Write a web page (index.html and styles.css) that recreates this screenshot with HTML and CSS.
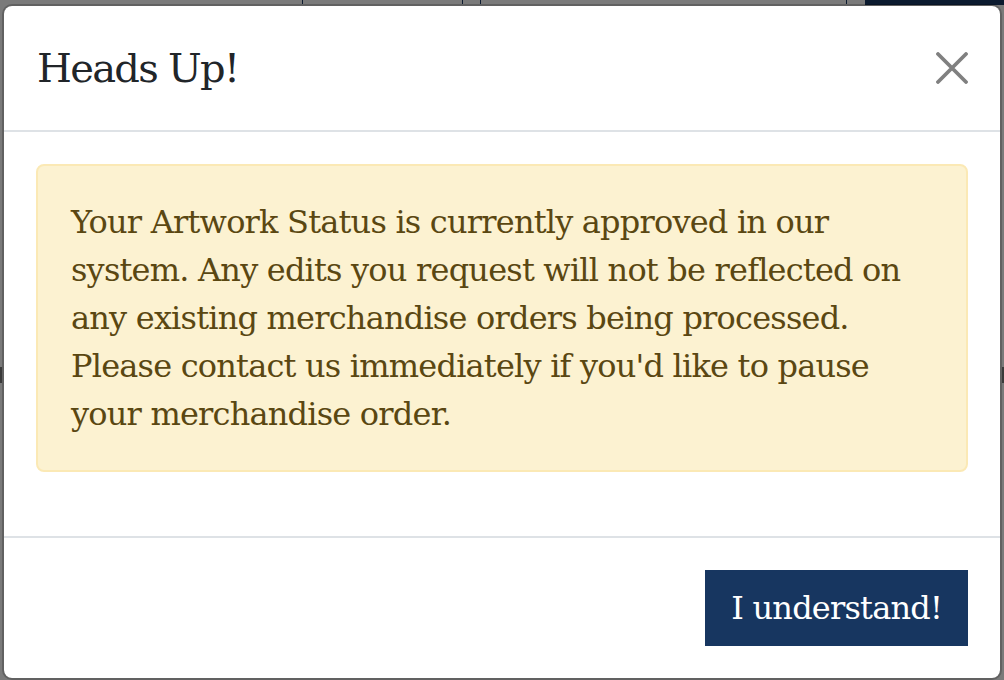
FILE: index.html
```html
<!DOCTYPE html>
<html lang="en">
<head>
<meta charset="utf-8">
<title>Heads Up!</title>
<link rel="stylesheet" href="styles.css">
</head>
<body>
<div class="page-bg" aria-hidden="true">
  <span class="bg-line l1"></span>
  <span class="bg-line l2"></span>
  <span class="bg-line l3"></span>
  <span class="bg-line l4"></span>
  <span class="bg-block"></span>
  <span class="bg-mark m1"></span>
  <span class="bg-mark m2"></span>
</div>
<div class="modal-content" role="dialog" aria-labelledby="title">
  <header class="modal-header">
    <h5 class="modal-title" id="title">Heads Up!</h5>
    <button class="close" type="button" aria-label="Close">
      <svg viewBox="0 0 32 32" width="32" height="32" aria-hidden="true">
        <path d="M2 2 L30 30 M30 2 L2 30" stroke="#808080" stroke-width="3.8" stroke-linecap="round" fill="none"/>
      </svg>
    </button>
  </header>
  <div class="modal-body">
    <div class="alert">Your Artwork Status is currently approved in our<br>system. Any edits you request will not be reflected on<br>any existing merchandise orders being processed.<br>Please contact us immediately if you'd like to pause<br>your merchandise order.</div>
  </div>
  <footer class="modal-footer">
    <button class="btn-primary" type="button">I understand!</button>
  </footer>
</div>
</body>
</html>
```
FILE: styles.css
```css
html, body {
  margin: 0;
  padding: 0;
}
body {
  background: #7a7a7a;
  width: 1004px;
  height: 680px;
  overflow: hidden;
  position: relative;
  font-family: "DejaVu Serif", "Liberation Serif", serif;
  padding: 4px 2px 0 2px;
  box-sizing: border-box;
}
.page-bg {
  position: absolute;
  inset: 0;
}
.bg-line {
  position: absolute;
  top: 0;
  width: 1px;
  height: 4px;
  background: #0d1b30;
}
.l1 { left: 302px; }
.l2 { left: 462px; }
.l3 { left: 480px; }
.l4 { left: 846px; }
.bg-block {
  position: absolute;
  top: 0;
  left: 865px;
  width: 139px;
  height: 5px;
  background: #0b1a2f;
}
.bg-mark {
  position: absolute;
  width: 2px;
  height: 16px;
  background: #3a3a3a;
}
.m1 { left: 0; top: 367px; }
.m2 { right: 0; top: 367px; }

.modal-content {
  position: relative;
  width: 1000px;
  background: #fff;
  border: 2px solid rgba(0, 0, 0, 0.2);
  border-radius: 10px;
  box-sizing: border-box;
  background-clip: padding-box;
  display: flex;
  flex-direction: column;
}
.modal-header {
  display: flex;
  align-items: center;
  justify-content: space-between;
  padding: 32px 32px 32px 33px;
  border-bottom: 2px solid #dee2e6;
}
.modal-title {
  margin: 0;
  font-size: 40px;
  line-height: 60px;
  font-weight: 400;
  letter-spacing: -1.7px;
  color: #212529;
}
.close {
  border: 0;
  background: none;
  padding: 0;
  margin: 0;
  width: 32px;
  height: 32px;
  display: flex;
}
.modal-body {
  padding: 32px;
}
.alert {
  background: #fcf2d1;
  border: 2px solid #fbe9b5;
  border-radius: 8px;
  padding: 32px 32px 32px 33px;
  margin-bottom: 32px;
  color: #5a4712;
  font-size: 32px;
  line-height: 48px;
  letter-spacing: -0.8px;
  white-space: nowrap;
}
.modal-footer {
  display: flex;
  justify-content: flex-end;
  padding: 32px;
  border-top: 2px solid #dee2e6;
}
.btn-primary {
  font-family: inherit;
  font-size: 32px;
  line-height: 48px;
  letter-spacing: -0.8px;
  padding: 12px 24px;
  border: 2px solid #173660;
  background: #173660;
  color: #fff;
  border-radius: 0;
}
```
